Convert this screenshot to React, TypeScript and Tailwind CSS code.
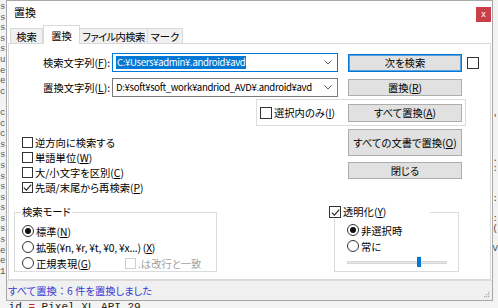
import React from "react";

const jp = "font-['Noto_Sans_CJK_JP',sans-serif] [font-feature-settings:'palt']";

function U({ c }: { c: string }) {
  return <span className="underline underline-offset-[1px] decoration-[0.5px]">{c}</span>;
}

function CheckBox({ checked, disabled, big }: { checked?: boolean; disabled?: boolean; big?: boolean }) {
  return (
    <span
      className={
        (big ? "w-[12px] h-[12px] " : "w-[11px] h-[11px] ") +
        (disabled ? "border-[#cfcfcf] " : "border-[#333333] ") +
        "border bg-white flex items-center justify-center shrink-0"
      }
    >
      {checked && (
        <svg width="9" height="9" viewBox="0 0 9 9">
          <path d="M0.8 4.6 L3.4 7.2 L8.2 1.6" stroke="#222" strokeWidth="1.1" fill="none" />
        </svg>
      )}
    </span>
  );
}

function Radio({ on }: { on?: boolean }) {
  return (
    <span className="w-[12px] h-[12px] rounded-full border border-[#333333] bg-white flex items-center justify-center shrink-0">
      {on && <span className="w-[6px] h-[6px] rounded-full bg-[#111111]" />}
    </span>
  );
}

function Btn({ children, className }: { children: React.ReactNode; className: string }) {
  return (
    <div className={"w-[114px] shrink-0 bg-[#e1e1e1] border flex items-center justify-center text-black whitespace-nowrap " + className}>
      {children}
    </div>
  );
}

function Chevron() {
  return (
    <svg width="8" height="5" viewBox="0 0 8 5" className="shrink-0">
      <path d="M0.5 0.5 L4 4 L7.5 0.5" stroke="#606060" strokeWidth="1" fill="none" />
    </svg>
  );
}

const leftLines = ["s", "s", "s", "s", "s", "u", "e", "e", "c", "", "cr", "cr", "cr", "sk", "sk", "sk", "sk", "sk", "sk", "sk", "sk", "sk", "sk", "e", "ey", "1."];
const rightLines = ["", "", "", "", "", "", "", "", "", "", "", "6'", "", "", "", "9.", "-:", "", "", "-:", "", "X:", "X(", "", "V"];

export default function App() {
  return (
    <div className="relative w-[498px] h-[308px] overflow-hidden bg-[#f3f3f3] font-['Liberation_Mono',monospace]">
      {/* editor behind the dialog */}
      <div className="flex flex-col">
        <div className="flex h-[300px]">
          <div className="w-[6px] overflow-hidden pt-[2px] flex flex-col text-[9px] leading-[10.6px] text-[#555]">
            {leftLines.map((l, i) => (
              <div key={i} className="h-[10.6px] whitespace-pre">{l || " "}</div>
            ))}
          </div>
          <div className="flex-1" />
          <div className="w-[6px] overflow-hidden pt-[4px] flex flex-col text-[9px] leading-[10px] text-[#444] items-end">
            {rightLines.map((l, i) => (
              <div key={i} className="h-[10px] whitespace-pre">{l || " "}</div>
            ))}
          </div>
        </div>
        <div className="h-[8px] pl-[2px] text-[11px] leading-[14px] text-[#222] whitespace-pre">
          {" id "}
          <span className="text-[#d02020]">=</span>
          {" Pixel XL API 29"}
        </div>
      </div>

      {/* dialog window */}
      <div className={"absolute left-[6px] top-0 w-[487px] h-[301px] bg-white border border-[#a8a8a8] flex flex-col text-[10.3px] text-black " + jp}>
        {/* title bar */}
        <div className="h-[24px] flex items-start shrink-0">
          <div className="pl-[7px] pt-[4px] text-[11px] leading-[15px]">置換</div>
          <div className="ml-auto mr-[1px] mt-[6px] w-[15px] h-[15px] bg-[#c9404a] flex items-center justify-center text-white text-[9px] leading-[9px] font-['Liberation_Sans',sans-serif]">
            x
          </div>
        </div>

        {/* tabs */}
        <div className="h-[18px] shrink-0 flex items-end pl-[3px]">
          <div className="w-[33px] h-[15px] bg-[#f0f0f0] border border-[#d9d9d9] border-b-0 flex items-center justify-center leading-[13px] whitespace-nowrap">検索</div>
          <div className="w-[37px] h-[19px] -mb-[1px] relative z-10 bg-white border border-[#d9d9d9] border-b-0 flex items-center justify-center leading-[13px] whitespace-nowrap">置換</div>
          <div className="w-[68px] h-[15px] bg-[#f0f0f0] border border-[#d9d9d9] border-b-0 border-l-0 flex items-center justify-center leading-[13px] whitespace-nowrap tracking-[-0.6px]">ファイル内検索</div>
          <div className="w-[35px] h-[15px] bg-[#f0f0f0] border border-[#d9d9d9] border-b-0 border-l-0 flex items-center justify-center leading-[13px] whitespace-nowrap">マーク</div>
        </div>

        {/* tab panel */}
        <div className="flex-1 mx-[1px] border border-[#d9d9d9] bg-white flex flex-col pt-[9px]">
          {/* row 1 */}
          <div className="flex items-start h-[19px]">
            <div className="w-[101px] text-right leading-[19px] whitespace-nowrap">
              検索文字列(<U c="F" />):
            </div>
            <div className="ml-[2px] w-[226px] h-[19px] border border-[#0078d7] flex items-center pl-[3px] pr-[5px]">
              <span className="bg-[#0078d7] text-white leading-[13px] px-[1px] whitespace-nowrap text-[9.6px] tracking-[-0.35px]">C:¥Users¥admin¥.android¥avd</span>
              <span className="ml-auto">
                <Chevron />
              </span>
            </div>
            <Btn className="ml-[10px] mt-[1px] h-[18px] border-[#0078d7] shadow-[inset_0_0_0_1px_#5aa0dc]">次を検索</Btn>
            <span className="ml-[5px] mt-[4px]">
              <CheckBox big />
            </span>
          </div>

          {/* row 2 */}
          <div className="flex items-start h-[19px] mt-[6px]">
            <div className="w-[101px] text-right leading-[19px] whitespace-nowrap">
              置換文字列(<U c="L" />):
            </div>
            <div className="ml-[2px] w-[226px] h-[19px] border border-[#7a7a7a] flex items-center pl-[3px] pr-[5px] overflow-hidden">
              <span className="leading-[13px] whitespace-nowrap text-[9.6px] tracking-[-0.35px]">D:¥soft¥soft_work¥andriod_AVD¥.android¥avd</span>
              <span className="ml-auto pl-[2px]">
                <Chevron />
              </span>
            </div>
            <Btn className="ml-[10px] mt-[1px] h-[17px] border-[#adadad]">
              <span>
                置換(<U c="R" />)
              </span>
            </Btn>
          </div>

          {/* row 3: in selection group */}
          <div className="flex mt-[2px]">
            <div className="ml-[247px] w-[210px] h-[27px] border border-[#dcdcdc] flex items-center">
              <span className="ml-[3px]">
                <CheckBox big />
              </span>
              <span className="ml-[2px] whitespace-nowrap">
                選択内のみ(<U c="I" />)
              </span>
              <Btn className="ml-auto mr-[3px] h-[18px] border-[#adadad]">
                <span>
                  すべて置換(<U c="A" />)
                </span>
              </Btn>
            </div>
          </div>

          {/* row 4 */}
          <div className="flex mt-[1px]">
            <div className="w-[339px] pl-[13px] pt-[8px] flex flex-col">
              {[
                { t: "逆方向に検索する", k: "", c: false },
                { t: "単語単位", k: "W", c: false },
                { t: "大/小文字を区別", k: "C", c: false },
                { t: "先頭/末尾から再検索", k: "P", c: true },
              ].map((r, i) => (
                <div key={i} className="h-[15px] flex items-center">
                  <CheckBox checked={r.c} />
                  <span className="ml-[2px] whitespace-nowrap leading-[13px]">
                    {r.t}
                    {r.k && (
                      <>
                        (<U c={r.k} />)
                      </>
                    )}
                  </span>
                </div>
              ))}
            </div>
            <div className="flex flex-col pt-[2px]">
              <Btn className="h-[27px] border-[#adadad]">
                <span>
                  すべての文書で置換(<U c="O" />)
                </span>
              </Btn>
              <Btn className="mt-[6px] h-[17px] border-[#adadad]">閉じる</Btn>
            </div>
          </div>

          {/* row 5: group boxes */}
          <div className="flex mt-[17px]">
            <div className="relative ml-[5px] w-[203px] h-[60px] border border-[#dcdcdc] pl-[7px] pt-[10px] flex flex-col">
              <div className="absolute -top-[8px] left-[6px] px-[1px] leading-[14px] bg-white whitespace-nowrap">検索モード</div>
              <div className="h-[16px] flex items-center">
                <Radio on />
                <span className="ml-[2px] leading-[13px] whitespace-nowrap">
                  標準(<U c="N" />)
                </span>
              </div>
              <div className="h-[16px] flex items-center">
                <Radio />
                <span className="ml-[2px] leading-[13px] whitespace-nowrap tracking-[-0.2px]">
                  拡張(¥n, ¥r, ¥t, ¥0, ¥x...) (<U c="X" />)
                </span>
              </div>
              <div className="h-[16px] flex items-center">
                <div className="w-[103px] flex items-center">
                  <Radio />
                  <span className="ml-[2px] leading-[13px] whitespace-nowrap">
                    正規表現(<U c="G" />)
                  </span>
                </div>
                <CheckBox disabled />
                <span className="ml-[2px] leading-[13px] whitespace-nowrap text-[#a0a0a0]">.は改行と一致</span>
              </div>
            </div>

            <div className="relative ml-[117px] w-[125px] h-[60px] border border-[#dcdcdc] pl-[12px] pt-[9px] flex flex-col">
              <div className="absolute -top-[8px] -left-[6px] w-[101px] h-[14px] bg-white flex items-center">
                <CheckBox checked big />
                <span className="ml-[2px] leading-[14px] whitespace-nowrap">
                  透明化(<U c="Y" />)
                </span>
              </div>
              <div className="h-[16px] flex items-center">
                <Radio on />
                <span className="ml-[2px] leading-[13px] whitespace-nowrap">非選択時</span>
              </div>
              <div className="h-[16px] flex items-center">
                <Radio />
                <span className="ml-[2px] leading-[13px] whitespace-nowrap">常に</span>
              </div>
              <div className="h-[16px] flex items-center">
                <div className="relative w-[100px] h-[10px] flex items-center">
                  <div className="w-full h-[3px] bg-[#e7e7e7] border border-[#d6d6d6]" />
                  <div className="absolute left-[70px] top-0 w-[4px] h-[10px] bg-[#0078d7]" />
                </div>
              </div>
            </div>
          </div>
        </div>

        {/* status bar */}
        <div className="h-[20px] shrink-0 bg-[#f0f0f0] border-t border-[#dcdcdc] flex items-center pl-[1px] pr-[2px]">
          <span className="text-[#3b3bd2] leading-[14px] whitespace-nowrap">
            すべて置換<span className="[font-feature-settings:normal]">：</span>6 件を置換しました
          </span>
          <svg width="7" height="7" viewBox="0 0 7 7" className="ml-auto self-end mb-[2px]">
            <rect x="5" y="1" width="1.2" height="1.2" fill="#a8a8a8" />
            <rect x="3" y="3" width="1.2" height="1.2" fill="#a8a8a8" />
            <rect x="5" y="3" width="1.2" height="1.2" fill="#a8a8a8" />
            <rect x="1" y="5" width="1.2" height="1.2" fill="#a8a8a8" />
            <rect x="3" y="5" width="1.2" height="1.2" fill="#a8a8a8" />
            <rect x="5" y="5" width="1.2" height="1.2" fill="#a8a8a8" />
          </svg>
        </div>
      </div>
    </div>
  );
}
